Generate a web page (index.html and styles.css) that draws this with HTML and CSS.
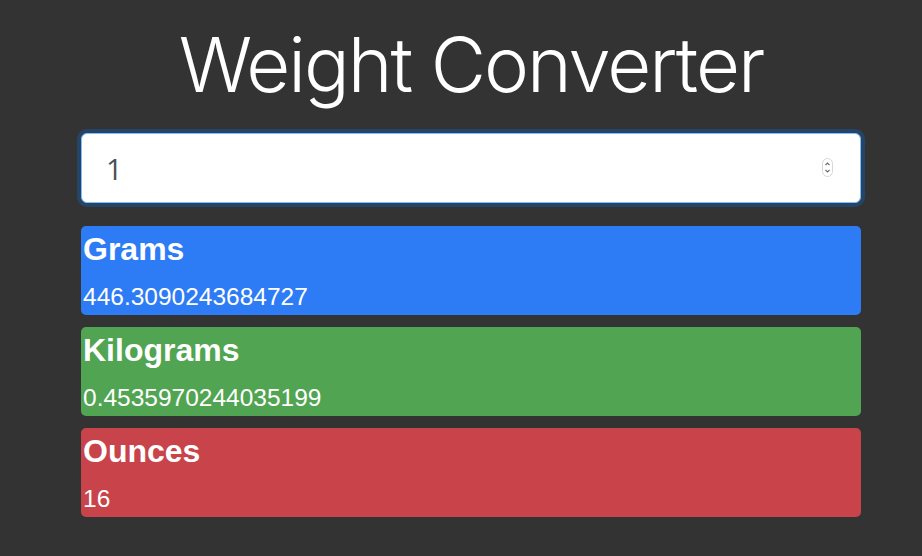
FILE: index.html
```html
<!DOCTYPE html>
<html lang="en">
<head>
<meta charset="utf-8">
<title>Weight Converter</title>
<link rel="stylesheet" href="styles.css">
</head>
<body>
<main class="container">
  <h1 class="title">Weight Converter</h1>
  <div class="input-wrap">
    <input class="weight-input" type="number" value="1">
    <span class="spinner">
      <svg width="11" height="19" viewBox="0 0 11 19">
        <rect x="0.5" y="0.5" width="10" height="18" rx="5" fill="#fff" stroke="#d6d6d6"/>
        <path d="M3.5 7 L5.5 5 L7.5 7" fill="none" stroke="#6b6b6b" stroke-width="1.1"/>
        <path d="M3.5 12 L5.5 14 L7.5 12" fill="none" stroke="#6b6b6b" stroke-width="1.1"/>
      </svg>
    </span>
  </div>
  <section class="card card-grams">
    <h4 class="card-title">Grams</h4>
    <div class="card-value">446.3090243684727</div>
  </section>
  <section class="card card-kg">
    <h4 class="card-title">Kilograms</h4>
    <div class="card-value">0.4535970244035199</div>
  </section>
  <section class="card card-oz">
    <h4 class="card-title">Ounces</h4>
    <div class="card-value">16</div>
  </section>
</main>
</body>
</html>
```
FILE: styles.css
```css
html, body {
  margin: 0;
  padding: 0;
}
body {
  background: #333333;
  font-family: "Liberation Sans", Arial, sans-serif;
  color: #ffffff;
  height: 556px;
  overflow: hidden;
}
.container {
  width: 780px;
  margin-left: 81px;
  display: flex;
  flex-direction: column;
}
.title {
  margin: 0;
  padding-top: 26px;
  font-family: Inter, "Liberation Sans", sans-serif;
  font-weight: 300;
  font-size: 76px;
  line-height: 76px;
  text-align: center;
  color: #ffffff;
  letter-spacing: -2px;
}
.input-wrap {
  position: relative;
  margin-top: 31px;
  height: 70px;
}
.weight-input {
  box-sizing: border-box;
  width: 100%;
  height: 70px;
  border: 1px solid #80bdff;
  border-radius: 6px;
  box-shadow: 0 0 0 4px rgba(0, 123, 255, 0.25);
  background: #ffffff;
  padding: 0 24px;
  font-family: "Open Sans", "Liberation Sans", sans-serif;
  font-size: 29px;
  color: #495057;
  outline: none;
  -moz-appearance: textfield;
  appearance: textfield;
}
.weight-input::-webkit-inner-spin-button,
.weight-input::-webkit-outer-spin-button {
  -webkit-appearance: none;
  margin: 0;
}
.spinner {
  position: absolute;
  left: 741px;
  top: 25px;
  width: 11px;
  height: 19px;
  display: block;
}
.spinner svg {
  display: block;
}
.card {
  box-sizing: border-box;
  height: 89px;
  padding: 4px 2px 0;
  border-radius: 5px;
  margin-top: 12px;
}
.input-wrap + .card {
  margin-top: 23px;
}
.card-grams { background: #2e7bf6; }
.card-kg { background: #51a451; }
.card-oz { background: #c9434a; }
.card-title {
  margin: 0 0 11px;
  font-size: 32px;
  line-height: 38px;
  font-weight: 700;
}
.card-value {
  font-size: 24.5px;
  line-height: 36px;
}
```
